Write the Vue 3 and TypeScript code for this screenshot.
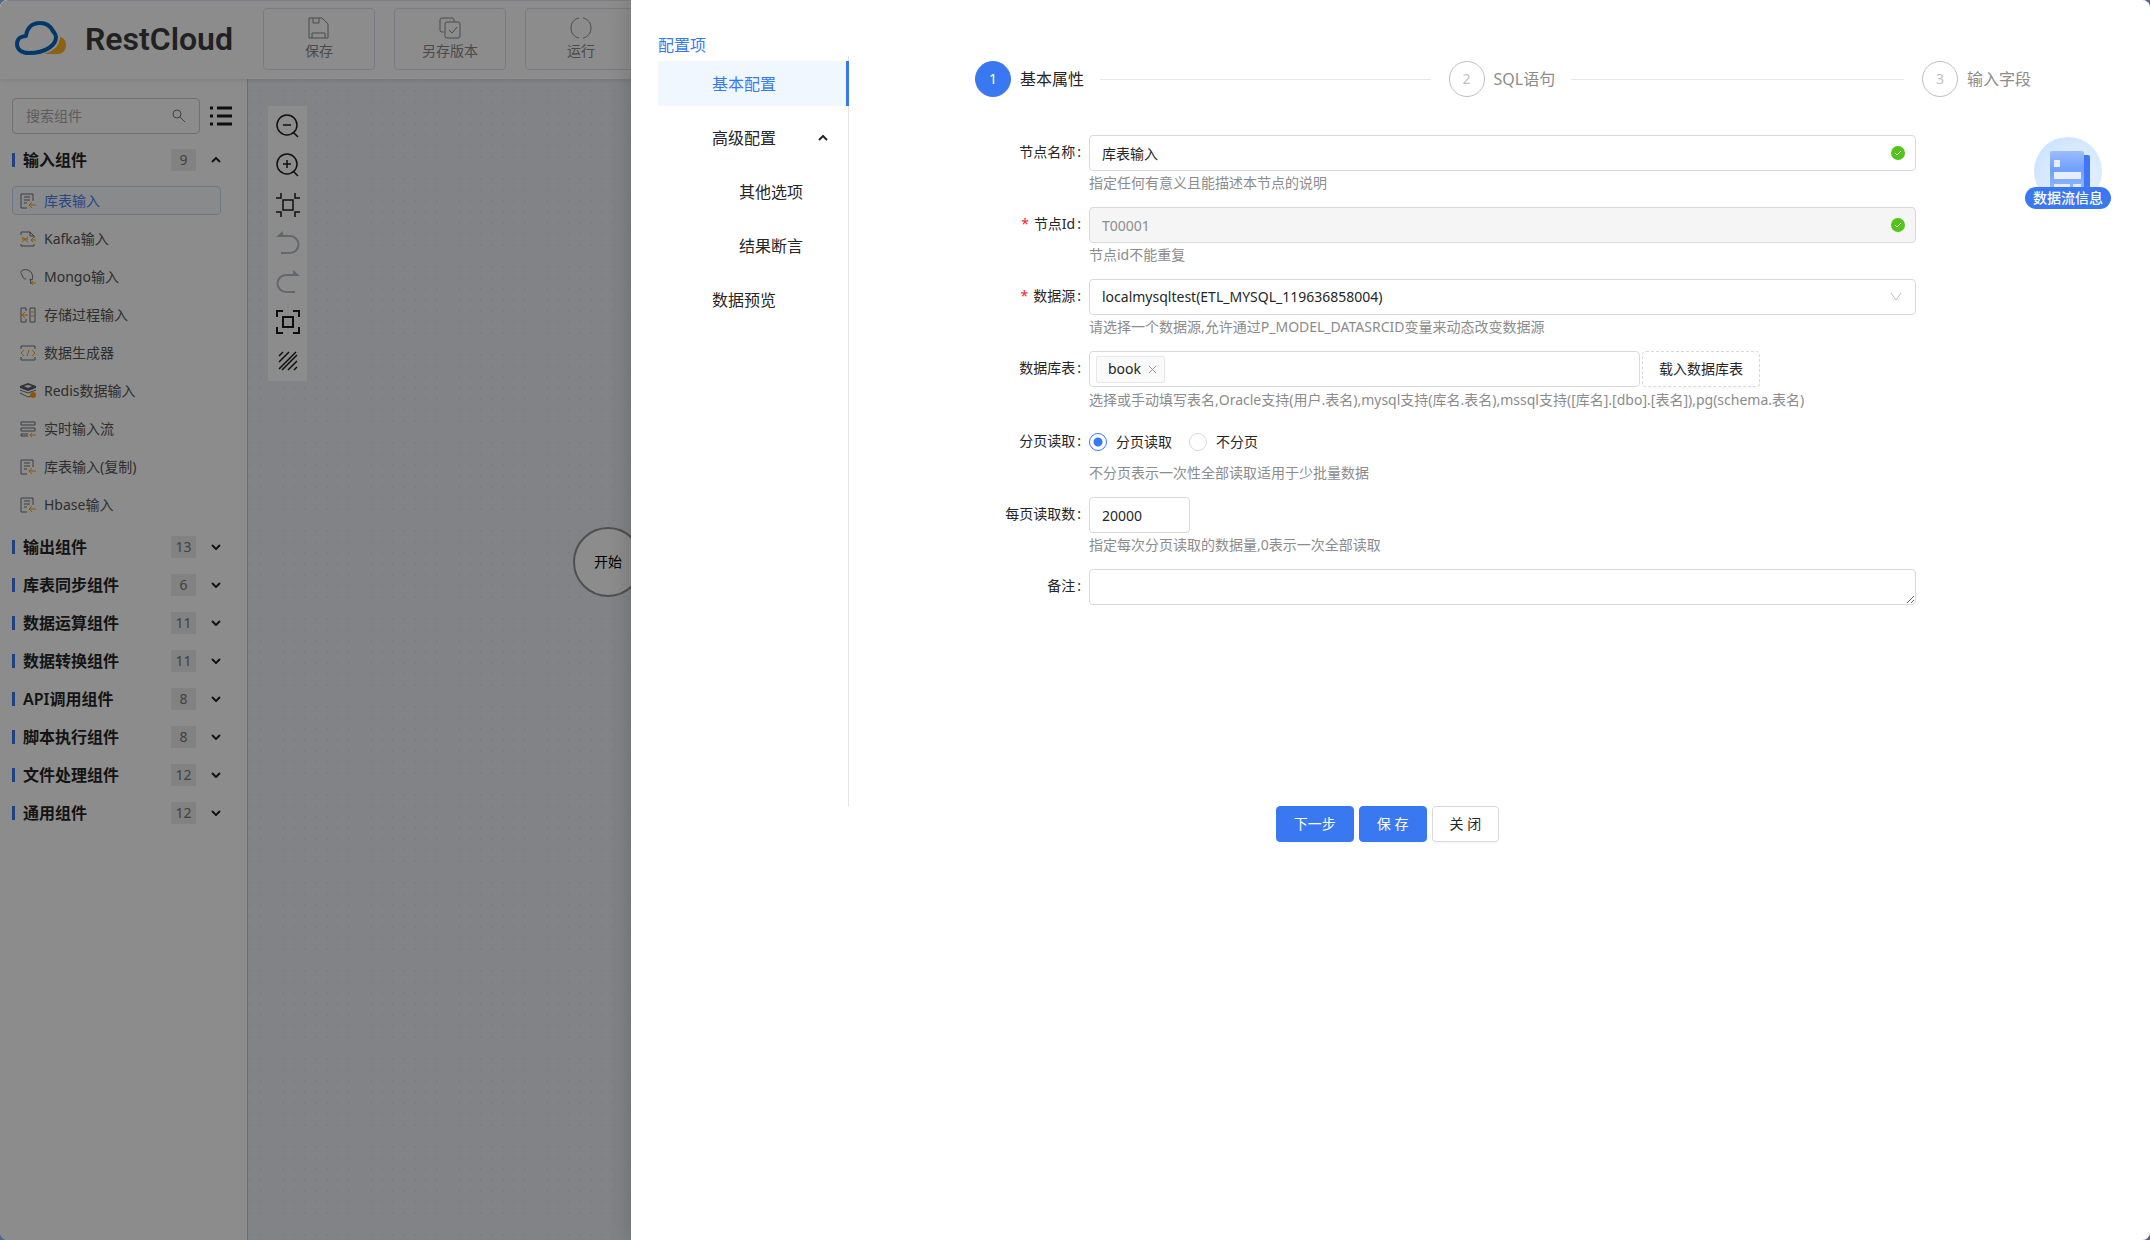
<script setup lang="ts">
import { ref } from 'vue'

interface Component {
  name: string
  icon: 'table' | 'kafka' | 'mongo' | 'proc' | 'code' | 'redis' | 'stream'
}
interface Category {
  name: string
  count: number
}
interface MenuItem {
  name: string
  sub?: boolean
  open?: boolean
}

const actions: string[] = ['保存', '另存版本', '运行']

const components: Component[] = [
  { name: '库表输入', icon: 'table' },
  { name: 'Kafka输入', icon: 'kafka' },
  { name: 'Mongo输入', icon: 'mongo' },
  { name: '存储过程输入', icon: 'proc' },
  { name: '数据生成器', icon: 'code' },
  { name: 'Redis数据输入', icon: 'redis' },
  { name: '实时输入流', icon: 'stream' },
  { name: '库表输入(复制)', icon: 'table' },
  { name: 'Hbase输入', icon: 'table' },
]

const categories: Category[] = [
  { name: '输出组件', count: 13 },
  { name: '库表同步组件', count: 6 },
  { name: '数据运算组件', count: 11 },
  { name: '数据转换组件', count: 11 },
  { name: 'API调用组件', count: 8 },
  { name: '脚本执行组件', count: 8 },
  { name: '文件处理组件', count: 12 },
  { name: '通用组件', count: 12 },
]

const menu: MenuItem[] = [
  { name: '基本配置' },
  { name: '高级配置', open: true },
  { name: '其他选项', sub: true },
  { name: '结果断言', sub: true },
  { name: '数据预览' },
]

const steps: string[] = ['基本属性', 'SQL语句', '输入字段']

const activeComponent = ref(0)
const activeMenu = ref(0)
const nodeName = ref('库表输入')
const nodeId = ref('T00001')
const paging = ref('page')
const pageSize = ref('20000')
const remark = ref('')
</script>

<template>
  <div class="app">
    <header class="header">
      <div class="logo">
        <svg class="logo-mark" viewBox="0 0 52 36" aria-hidden="true">
          <path d="M28 33h15c5 0 8-4 8-9 0-4-2-7-6-8-1 8-7 15-17 17z" fill="#ffb321" />
          <path d="M14 32.500C6 33 2 28 2 23c0-5 4-8 9-9C12 6 18 2 25 2c8 0 13 5 14 11 3 2 4 5 3 8-2 5-9 11-28 11.500z" fill="#fff" stroke="#fff" stroke-width="4" />
          <path d="M14 32C6 32 2 28 2 23c0-5 4-8 9-8C12 7 17 2 25 2c7 0 11 4 13 8 1 2 3 3 3 6 0 8-10 16-27 16z" fill="#fff" stroke="#0068bf" stroke-width="4" stroke-linejoin="round" />
        </svg>
        <span class="logo-text">RestCloud</span>
      </div>
      <button v-for="(a, i) in actions" :key="a" class="action" type="button">
        <svg viewBox="0 0 22 22" class="action-icon" aria-hidden="true">
          <g v-if="i === 0">
            <path d="M1 1h13l6 6v14H1z M5 1v5h6V1 M4 21v-5h13v5" />
          </g>
          <g v-else-if="i === 1">
            <path d="M5 15H3a2 2 0 0 1-2-2V3a2 2 0 0 1 2-2h10a2 2 0 0 1 2 2v2" />
            <rect x="6" y="5" width="15" height="16" rx="2" />
            <path d="M10 13l3 3 5-6" />
          </g>
          <g v-else>
            <path d="M9 1C4 2 1 6 1 11s3 9 8 10 M13 1c5 1 8 5 8 10s-3 9-8 10" />
          </g>
        </svg>
        <span>{{ a }}</span>
      </button>
    </header>

    <div class="workspace">
      <aside class="sidebar">
        <div class="search-row">
          <div class="search">
            <input type="text" placeholder="搜索组件" aria-label="搜索组件" />
            <svg viewBox="0 0 14 14" aria-hidden="true"><circle cx="5" cy="5" r="4" /><path d="M8 8l5 5" /></svg>
          </div>
          <svg class="list-icon" viewBox="0 0 22 20" aria-hidden="true">
            <path d="M0 2h3M0 10h3M0 18h3M7 2h15M7 10h15M7 18h15" />
          </svg>
        </div>

        <button class="category" type="button">
          <span class="bar"></span>
          <span class="category-name">输入组件</span>
          <span class="count">9</span>
          <svg class="chevron" viewBox="0 0 10 6" aria-hidden="true"><path d="M1 5l4-4 4 4" /></svg>
        </button>

        <ul class="items">
          <li v-for="(c, i) in components" :key="c.name">
            <button type="button" class="item" :class="{ active: i === activeComponent }" @click="activeComponent = i">
              <svg viewBox="0 0 16 16" aria-hidden="true">
                <template v-if="c.icon === 'table'">
                  <path class="g" d="M7 15H1V1h12v7M4 4h6M4 7h6M4 10h3" />
                  <path class="o" d="M16 12H9M12 9l-3 3 3 3" />
                </template>
                <template v-else-if="c.icon === 'kafka'">
                  <path class="g" d="M1 4V1h9l4 4v2M10 1v4h4M1 13v2h13v-2" />
                  <path class="o" d="M2 6l6 5M2 11l6-5M2 8h6M16 9h-5M13 7l-2 2 2 2" />
                </template>
                <template v-else-if="c.icon === 'mongo'">
                  <path class="g" d="M3 1c3-1 6 0 8 2 2 3 2 6 1 8l-2-1 1 5M3 1C0 2 1 4 2 6c1 3 2 4 4 4" />
                  <path class="o" d="M16 14h-4M13 12l-2 2 2 2" />
                </template>
                <template v-else-if="c.icon === 'proc'">
                  <path class="g" d="M6 1H1v14h5v-3M6 1v3M10 1h5v14h-5z" />
                  <path class="o" d="M8 8H2M5 5L2 8l3 3M11 5h3M11 9h3" />
                </template>
                <template v-else-if="c.icon === 'code'">
                  <path class="g" d="M1 4V1h14v3M1 12v3h14v-3" />
                  <path class="o" d="M4 5L1 8l3 3M12 5l3 3-3 3M9 5l-2 6" />
                </template>
                <template v-else-if="c.icon === 'redis'">
                  <path d="M8 0l8 3v2L8 8 0 5V3z" fill="#59616b" />
                  <path d="M4 3l4-1 4 1-4 2z" fill="#fff" />
                  <path class="g" d="M0 7l8 3 8-3M0 10l8 4 4-1" />
                  <circle cx="13" cy="12" r="3" fill="#ff9f00" />
                </template>
                <template v-else>
                  <path class="g" d="M1 1h14v3H1zM1 7h14v3H1zM8 15H1v-2h7" />
                  <path class="o" d="M16 14h-6M12 12l-2 2 2 2" />
                </template>
              </svg>
              <span>{{ c.name }}</span>
            </button>
          </li>
        </ul>

        <div class="categories">
          <button v-for="c in categories" :key="c.name" class="category" type="button">
            <span class="bar"></span>
            <span class="category-name">{{ c.name }}</span>
            <span class="count">{{ c.count }}</span>
            <svg class="chevron" viewBox="0 0 10 6" aria-hidden="true"><path d="M1 1l4 4 4-4" /></svg>
          </button>
        </div>
      </aside>

      <main class="canvas">
        <div class="tools">
          <button type="button" aria-label="缩小">
            <svg viewBox="0 0 24 24"><circle cx="11" cy="10" r="10" /><path d="M7 10h8M17 17l5 5" /></svg>
          </button>
          <button type="button" aria-label="放大">
            <svg viewBox="0 0 24 24"><circle cx="11" cy="10" r="10" /><path d="M7 10h8M11 6v8M17 17l5 5" /></svg>
          </button>
          <button type="button" aria-label="适应画布">
            <svg viewBox="0 0 24 24"><path d="M7 7h10v10H7zM0 5h5V0M24 5h-5V0M0 19h5v5M24 19h-5v5" /></svg>
          </button>
          <button type="button" aria-label="撤销" class="muted">
            <svg viewBox="0 0 24 24"><path d="M4 4h10a8 8 0 0 1 0 17H5" /><path class="solid" d="M0 5l7-6v6z" /></svg>
          </button>
          <button type="button" aria-label="重做" class="muted">
            <svg viewBox="0 0 24 24"><path d="M20 4H10a8 8 0 0 0 0 17h9" /><path class="solid" d="M24 5l-7-6v6z" /></svg>
          </button>
          <button type="button" aria-label="全屏" class="heavy">
            <svg viewBox="0 0 24 24"><path d="M7 7h10v10H7zM1 7V1h6M17 1h6v6M23 17v6h-6M7 23H1v-6" /></svg>
          </button>
          <button type="button" aria-label="框选">
            <svg viewBox="0 0 24 24"><path d="M3 7l4-4M3 13L13 3M3 20L20 3M6 21L21 6M12 21l9-9M18 21l3-3" /></svg>
          </button>
        </div>
        <div class="node">开始</div>
      </main>
    </div>

    <div class="mask"></div>

    <section class="drawer">
      <h2 class="drawer-title">配置项</h2>
      <div class="panel">
        <nav class="menu">
          <a
            v-for="(m, i) in menu"
            :key="m.name"
            href="#"
            class="menu-item"
            :class="{ sub: m.sub, active: i === activeMenu }"
            @click.prevent="activeMenu = i"
          >
            <span>{{ m.name }}</span>
            <svg v-if="m.open" class="chevron" viewBox="0 0 10 6" aria-hidden="true"><path d="M1 5l4-4 4 4" /></svg>
          </a>
        </nav>

        <div class="content">
          <ol class="steps">
            <li v-for="(s, i) in steps" :key="s" class="step" :class="{ current: i === 0 }">
              <span class="step-no">{{ i + 1 }}</span>
              <span class="step-name">{{ s }}</span>
              <span v-if="i < steps.length - 1" class="step-line"></span>
            </li>
          </ol>

          <div class="form-area">
            <form class="form" @submit.prevent>
              <div class="row">
                <label class="label" for="node-name">节点名称</label>
                <div class="field">
                  <div class="control">
                    <input id="node-name" v-model="nodeName" class="input" type="text" />
                    <svg class="ok" viewBox="0 0 14 14" aria-hidden="true"><circle cx="7" cy="7" r="7" /><path d="M4 7l2 2 4-4" /></svg>
                  </div>
                  <p class="hint">指定任何有意义且能描述本节点的说明</p>
                </div>
              </div>

              <div class="row">
                <label class="label required" for="node-id">节点Id</label>
                <div class="field">
                  <div class="control">
                    <input id="node-id" v-model="nodeId" class="input" type="text" disabled />
                    <svg class="ok" viewBox="0 0 14 14" aria-hidden="true"><circle cx="7" cy="7" r="7" /><path d="M4 7l2 2 4-4" /></svg>
                  </div>
                  <p class="hint">节点id不能重复</p>
                </div>
              </div>

              <div class="row">
                <label class="label required" for="source">数据源</label>
                <div class="field">
                  <div class="control">
                    <select id="source" class="input">
                      <option>localmysqltest(ETL_MYSQL_119636858004)</option>
                    </select>
                    <svg class="arrow" viewBox="0 0 12 10" aria-hidden="true"><path d="M1 1l5 7 5-7" /></svg>
                  </div>
                  <p class="hint">请选择一个数据源,允许通过P_MODEL_DATASRCID变量来动态改变数据源</p>
                </div>
              </div>

              <div class="row">
                <label class="label" for="tables">数据库表</label>
                <div class="field">
                  <div class="control split">
                    <div class="input tags">
                      <span class="tag">
                        book
                        <button type="button" aria-label="移除">
                          <svg viewBox="0 0 10 10"><path d="M1 1l8 8M9 1L1 9" /></svg>
                        </button>
                      </span>
                      <input id="tables" type="text" />
                    </div>
                    <button type="button" class="btn dashed">载入数据库表</button>
                  </div>
                  <p class="hint">选择或手动填写表名,Oracle支持(用户.表名),mysql支持(库名.表名),mssql支持([库名].[dbo].[表名]),pg(schema.表名)</p>
                </div>
              </div>

              <div class="row">
                <span id="paging-label" class="label">分页读取</span>
                <div class="field">
                  <div class="control radios" role="radiogroup" aria-labelledby="paging-label">
                    <label><input v-model="paging" type="radio" name="paging" value="page" />分页读取</label>
                    <label><input v-model="paging" type="radio" name="paging" value="all" />不分页</label>
                  </div>
                  <p class="hint">不分页表示一次性全部读取适用于少批量数据</p>
                </div>
              </div>

              <div class="row">
                <label class="label" for="page-size">每页读取数</label>
                <div class="field">
                  <div class="control">
                    <input id="page-size" v-model="pageSize" class="input short" type="text" />
                  </div>
                  <p class="hint">指定每次分页读取的数据量,0表示一次全部读取</p>
                </div>
              </div>

              <div class="row">
                <label class="label" for="remark">备注</label>
                <div class="field">
                  <textarea id="remark" v-model="remark" class="input" rows="1"></textarea>
                </div>
              </div>
            </form>

            <button type="button" class="flow-info">
              <svg viewBox="0 0 68 68" aria-hidden="true">
                <defs>
                  <radialGradient id="halo" cx="60%" cy="60%" r="65%">
                    <stop offset="0" stop-color="#eef5ff" />
                    <stop offset="1" stop-color="#cce4ff" />
                  </radialGradient>
                  <linearGradient id="page" x1="0" y1="0" x2="0" y2="1">
                    <stop offset="0" stop-color="#9cbcff" />
                    <stop offset="0.400" stop-color="#6f9ffb" />
                    <stop offset="1" stop-color="#a5c3ff" />
                  </linearGradient>
                </defs>
                <circle cx="34" cy="34" r="34" fill="url(#halo)" />
                <rect x="45" y="18" width="11" height="42" rx="2" fill="#3f76fa" />
                <rect x="16" y="14" width="34" height="48" rx="2" fill="url(#page)" />
                <path d="M20 23h6v7h-6zM20 35h27v7H20zM20 47h16v6H20zM39 47h8v6h-8z" fill="#e6eefe" />
              </svg>
              <span>数据流信息</span>
            </button>
          </div>
        </div>
      </div>

      <footer class="footer">
        <button type="button" class="btn primary">下一步</button>
        <button type="button" class="btn primary">保 存</button>
        <button type="button" class="btn">关 闭</button>
      </footer>
    </section>
  </div>
</template>

<style>
body {
  margin: 0;
  background: #52668a;
}
</style>

<style scoped>
* {
  box-sizing: border-box;
}
.app {
  position: relative;
  display: flex;
  flex-direction: column;
  min-height: 100vh;
  border-radius: 8px;
  overflow: hidden;
  background: #fff;
  color: #262626;
  font: 14px/20px 'Noto Sans', 'Noto Sans CJK SC', sans-serif;
}
button,
input,
select,
textarea {
  font: inherit;
  color: inherit;
}
button {
  margin: 0;
  padding: 0;
  border: 0;
  background: none;
  cursor: pointer;
}
svg {
  display: block;
  flex: none;
}
ul,
ol,
p,
h2 {
  margin: 0;
  padding: 0;
  list-style: none;
  font-weight: 400;
}

/* Header */
.header {
  position: relative;
  z-index: 1;
  display: flex;
  gap: 19px;
  height: 79px;
  padding: 7px 0 0 15px;
  border-top: 1px solid #e3e6ee;
  box-shadow: 0 1px 5px rgba(0, 0, 0, 0.12);
  background: #fff;
}
.logo {
  display: flex;
  align-items: center;
  gap: 18px;
  width: 229px;
  height: 62px;
}
.logo-mark {
  width: 52px;
  height: 36px;
}
.logo-text {
  font: 600 32px/40px Roboto, sans-serif;
  color: #3c3c3c;
}
.action {
  display: flex;
  flex-direction: column;
  align-items: center;
  justify-content: center;
  gap: 2px;
  width: 112px;
  height: 62px;
  border: 1px solid #dbe1f0;
  border-radius: 4px;
  color: #888;
}
.action-icon {
  width: 22px;
  height: 22px;
  fill: none;
  stroke: #888;
}

/* Sidebar */
.workspace {
  display: flex;
  flex: 1;
}
.sidebar {
  width: 248px;
  padding: 19px 26px 0 12px;
  border-right: 1px solid #c8c8cc;
}
.search-row {
  display: flex;
  align-items: center;
  gap: 10px;
  margin-right: -11px;
}
.search {
  display: flex;
  align-items: center;
  flex: 1;
  min-width: 0;
  height: 36px;
  padding: 0 13px;
  border: 1px solid #ccc;
  border-radius: 4px;
}
.search input {
  flex: 1;
  min-width: 0;
  padding: 0;
  border: 0;
  outline: 0;
  background: none;
}
.search input::placeholder {
  color: #aaa;
}
.search svg {
  width: 14px;
  height: 14px;
  fill: none;
  stroke: #777;
}
.list-icon {
  width: 22px;
  height: 20px;
  stroke: #1c1c1c;
  stroke-width: 3;
}
.category {
  display: flex;
  align-items: center;
  width: 100%;
  height: 38px;
  text-align: left;
}
.search-row + .category {
  margin-top: 7px;
}
.bar {
  width: 3px;
  height: 14px;
  margin-right: 8px;
  background: #3a78f2;
}
.category-name {
  flex: 1;
  font-size: 16px;
  font-weight: 600;
}
.count {
  width: 25px;
  margin-right: 15px;
  background: #ededed;
  color: #777;
  line-height: 22px;
  text-align: center;
}
.chevron {
  width: 10px;
  height: 6px;
  fill: none;
  stroke: #262626;
  stroke-width: 2;
}
.items {
  display: flex;
  flex-direction: column;
  gap: 9px;
  padding: 7px 0 9px;
}
.item {
  display: flex;
  align-items: center;
  gap: 8px;
  width: 100%;
  height: 29px;
  padding: 0 7px;
  border: 1px solid transparent;
  border-radius: 4px;
  color: #555;
}
.item.active {
  border-color: #c4dcf5;
  background: #fafcff;
  color: #4a80f5;
}
.item svg {
  width: 16px;
  height: 16px;
  fill: none;
}
.item .g {
  stroke: #6b717a;
}
.item .o {
  stroke: #ff9f00;
}

/* Canvas */
.canvas {
  position: relative;
  flex: 1;
  background: #edeff6 radial-gradient(circle at 1px 1px, #e3e5ec 1px, transparent 1px) 1px 0 / 11px 11px;
}
.tools {
  position: absolute;
  top: 27px;
  left: 20px;
  padding: 1px 0;
  background: #fff;
}
.tools button {
  display: flex;
  align-items: center;
  justify-content: center;
  width: 39px;
  height: 39px;
}
.tools svg {
  width: 24px;
  height: 24px;
  overflow: visible;
  fill: none;
  stroke: #1c1c1c;
  stroke-width: 1.5;
}
.tools .heavy svg {
  stroke-width: 2;
}
.tools .muted svg {
  stroke: #b4bac6;
  stroke-width: 2;
}
.tools .solid {
  fill: #b4bac6;
  stroke: none;
}
.node {
  position: absolute;
  top: 448px;
  left: 325px;
  width: 70px;
  height: 70px;
  border: 2px solid #919191;
  border-radius: 50%;
  background: #fff;
  color: #000;
  line-height: 66px;
  text-align: center;
}

/* Drawer */
.mask {
  position: absolute;
  inset: 0;
  z-index: 2;
  background: rgba(0, 0, 0, 0.45);
}
.drawer {
  position: absolute;
  inset: 0 0 0 631px;
  z-index: 3;
  padding: 35px 33px 0 27px;
  background: #fff;
  box-shadow: -6px 0 18px rgba(0, 0, 0, 0.12);
}
.drawer-title {
  height: 21px;
  color: #3a78f2;
  font-size: 16px;
  line-height: 21px;
}
.panel {
  display: flex;
  align-items: stretch;
  min-height: 750px;
}
.menu {
  display: flex;
  flex-direction: column;
  gap: 9px;
  width: 191px;
  padding-top: 5px;
  border-right: 1px solid #e4e4e4;
}
.menu-item {
  display: flex;
  align-items: center;
  justify-content: space-between;
  height: 45px;
  margin-right: -1px;
  padding: 0 21px 0 54px;
  color: #262626;
  font-size: 16px;
  text-decoration: none;
}
.menu-item.sub {
  padding-left: 81px;
}
.menu-item.active {
  border-right: 3px solid #3a78f2;
  background: #f0f7ff;
  color: #3a78f2;
}
.content {
  flex: 1;
  padding: 5px 0 0 126px;
}
.steps {
  display: flex;
  gap: 18px;
  margin-right: 86px;
  font-size: 16px;
}
.step {
  display: flex;
  align-items: center;
  flex: 1;
  color: #8c8c8c;
}
.step:last-child {
  flex: none;
}
.step-no {
  width: 36px;
  height: 36px;
  margin-right: 9px;
  border: 1px solid #bfbfbf;
  border-radius: 50%;
  color: #bfbfbf;
  font-size: 14px;
  line-height: 34px;
  text-align: center;
}
.step.current {
  color: #262626;
}
.step.current .step-no {
  border-color: #3a78f2;
  background: #3a78f2;
  color: #fff;
}
.step-line {
  flex: 1;
  height: 1px;
  margin-left: 16px;
  background: #e8e8e8;
}

/* Form */
.form-area {
  display: flex;
  align-items: flex-start;
  padding: 38px 6px 0 0;
}
.form {
  flex: 1;
}
.row {
  display: flex;
  padding-bottom: 12px;
}
.label {
  width: 114px;
  padding-right: 8px;
  line-height: 34px;
  text-align: right;
}
.label::after {
  content: ':';
  margin-left: 2px;
}
.required::before {
  content: '*';
  margin-right: 5px;
  color: #f5222d;
}
.field {
  flex: 1;
  min-width: 0;
}
.control {
  position: relative;
}
.input {
  display: block;
  width: 100%;
  height: 36px;
  margin: 0;
  padding: 0 12px;
  border: 1px solid #d9d9d9;
  border-radius: 4px;
  outline: 0;
  background: #fff;
  appearance: none;
}
.input:disabled {
  background: #f5f5f5;
  color: #8c8c8c;
}
.input.short {
  width: 101px;
}
textarea.input {
  padding: 7px 12px;
  min-height: 36px;
}
.ok {
  position: absolute;
  top: 11px;
  right: 11px;
  width: 14px;
  height: 14px;
  fill: #52c41a;
}
.ok path {
  fill: none;
  stroke: #fff;
}
.arrow {
  position: absolute;
  top: 13px;
  right: 14px;
  width: 12px;
  height: 10px;
  fill: none;
  stroke: #bfbfbf;
}
.hint {
  color: #8c8c8c;
  line-height: 24px;
  white-space: nowrap;
}
.split {
  display: flex;
  gap: 2px;
  padding-bottom: 1px;
}
.tags {
  display: flex;
  align-items: center;
  width: auto;
  flex: 0 1 551px;
  padding: 0 6px;
}
.tags input {
  flex: 1;
  min-width: 0;
  border: 0;
  outline: 0;
}
.tag {
  display: flex;
  align-items: center;
  gap: 7px;
  height: 27px;
  padding: 0 7px 0 11px;
  border: 1px solid #e8e8e8;
  border-radius: 2px;
  background: #fafafa;
}
.tag svg {
  width: 9px;
  height: 9px;
  stroke: #8c8c8c;
}
.radios {
  display: flex;
  gap: 17px;
  height: 37px;
  padding-bottom: 1px;
}
.radios label {
  display: flex;
  align-items: center;
  gap: 9px;
}
.radios input {
  width: 18px;
  height: 18px;
  margin: 0;
  border: 1px solid #d9d9d9;
  border-radius: 50%;
  background: #fff;
  appearance: none;
}
.radios input:checked {
  border-color: #3a78f2;
  background: radial-gradient(circle, #3a78f2 4px, #fff 5px);
}
.flow-info {
  display: flex;
  flex-direction: column;
  align-items: center;
  width: 86px;
  margin-left: 109px;
  padding-top: 2px;
  color: #fff;
}
.flow-info svg {
  width: 68px;
  height: 68px;
}
.flow-info span {
  z-index: 1;
  width: 100%;
  margin-top: -18px;
  border-radius: 11px;
  background: #3a78f2;
  line-height: 22px;
  font-weight: 500;
}

.btn {
  height: 36px;
  padding: 0 16px;
  border: 1px solid #d9d9d9;
  border-radius: 4px;
  background: #fff;
  box-shadow: 0 2px 0 rgba(0, 0, 0, 0.02);
  white-space: nowrap;
}
.dashed {
  border-style: dashed;
}
.primary {
  border-color: #3a78f2;
  background: #3a78f2;
  color: #fff;
}
.footer {
  display: flex;
  justify-content: center;
  gap: 5px;
}
.footer .btn {
  padding: 0 17px;
}
</style>
